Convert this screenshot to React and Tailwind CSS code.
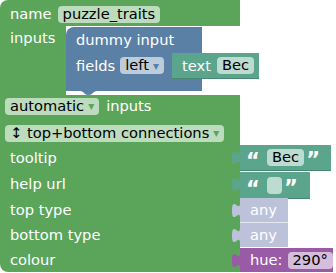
import React from "react";

const FONT = { fontFamily: '"DejaVu Sans", "Noto Sans", sans-serif' };

function Tab({ fillClass }) {
  return (
    <svg
      className="absolute left-[-8px] top-[5px] overflow-visible"
      width="9"
      height="15"
      viewBox="0 0 9 15"
    >
      <path className={fillClass} d="M8,0 C8,10 0,-8 0,7.5 S8,5 8,15 L9,15 L9,0 Z" />
    </svg>
  );
}

function Field({ children, className = "" }) {
  return (
    <span
      className={
        "h-[17px] px-[5px] rounded-[4px] bg-white/60 text-black flex items-center leading-none " +
        className
      }
    >
      {children}
    </span>
  );
}

function Quote({ ch }) {
  return (
    <span className="w-[18px] text-center text-white font-bold text-[21px] leading-none relative top-[4px]">
      {ch}
    </span>
  );
}

export default function App() {
  return (
    <div
      className="relative w-[336px] h-[273px] overflow-hidden bg-white text-[11pt] text-white"
      style={FONT}
    >
      <div className="flex flex-col">
        {/* top arm */}
        <div className="h-[26px] w-[240px] bg-[#5ba55b] rounded-tl-[8px] flex items-center pl-[10px] pt-[2px] gap-[6px]">
          <span>name</span>
          <Field>puzzle_traits</Field>
        </div>

        {/* statement area */}
        <div className="flex h-[69px]">
          <div className="w-[66px] bg-[#5ba55b] pl-[10px] pt-[3px] leading-[18px]">inputs</div>
          <div className="relative mt-[1px] flex flex-col self-start">
            <div className="h-[26px] w-[136px] bg-[#5b80a5] rounded-tl-[8px] flex items-center pl-[10px]">
              dummy input
            </div>
            <div className="flex h-[25px]">
              <div className="w-[106px] bg-[#5b80a5] flex items-center pl-[10px] gap-[5px]">
                <span>fields</span>
                <Field className="gap-[4px]">
                  left<span className="text-[#5b80a5] text-[12px]">▾</span>
                </Field>
              </div>
              <div className="relative w-[87px] bg-[#5ba58c] flex items-center pl-[10px] gap-[6px] shadow-[0_1px_0_#4a8772]">
                <span>text</span>
                <Field>Bec</Field>
              </div>
            </div>
            <div className="h-[13px] w-[136px] bg-[#5b80a5]" />
            <svg
              className="absolute left-[14px] top-full"
              width="17"
              height="4"
              viewBox="0 0 17 4"
            >
              <path className="fill-[#5b80a5]" d="M0,0 C4,0 4,4 8.5,4 C13,4 13,0 17,0 Z" />
            </svg>
          </div>
        </div>

        {/* lower section */}
        <div className="flex">
          <div className="w-[240px] bg-[#5ba55b] rounded-bl-[8px] flex flex-col pt-[2px]">
            <div className="h-[18px] flex items-center pl-[5px]">
              <Field className="gap-[4px]">
                automatic<span className="text-[#5ba55b] text-[12px]">▾</span>
              </Field>
              <span className="ml-[7px]">inputs</span>
            </div>
            <div className="h-[18px] mt-[9px] flex items-center pl-[5px]">
              <Field className="gap-[4px]">
                ↕ top+bottom connections<span className="text-[#5ba55b] text-[12px]">▾</span>
              </Field>
            </div>
            <div className="mt-[3px] h-[26px] flex items-center pl-[10px]">tooltip</div>
            <div className="h-[26px] flex items-center pl-[10px]">help url</div>
            <div className="h-[25px] flex items-center pl-[10px]">top type</div>
            <div className="h-[25px] flex items-center pl-[10px]">bottom type</div>
            <div className="h-[25px] flex items-center pl-[10px]">colour</div>
          </div>

          <div className="flex flex-col pt-[50px]">
            <div className="relative h-[25px] w-[91px] bg-[#5ba58c] flex items-center pl-[4px] shadow-[0_1px_0_#4a8772]">
              <Tab fillClass="fill-[#5ba58c]" />
              <Quote ch="“" />
              <Field className="ml-[5px]">Bec</Field>
              <span className="ml-[2px]"><Quote ch="”" /></span>
            </div>
            <div className="relative mt-[2px] h-[26px] w-[70px] bg-[#5ba58c] flex items-center pl-[4px] shadow-[0_1px_0_#4a8772]">
              <Tab fillClass="fill-[#5ba58c]" />
              <Quote ch="“" />
              <Field className="ml-[5px] w-[15px]" />
              <span className="ml-[2px]"><Quote ch="”" /></span>
            </div>
            <div className="relative h-[24px] w-[48px] bg-[#bdc2db] flex items-center pl-[10px]">
              <Tab fillClass="fill-[#bdc2db]" />
              any
            </div>
            <div className="relative h-[25px] w-[48px] bg-[#bdc2db] border-t border-white/60 flex items-center pl-[10px]">
              <Tab fillClass="fill-[#bdc2db]" />
              any
            </div>
            <div className="relative mt-[1px] h-[24px] w-[93px] bg-[#995ba5] flex items-center pl-[10px] gap-[5px]">
              <Tab fillClass="fill-[#995ba5]" />
              <span>hue:</span>
              <Field>290°</Field>
            </div>
          </div>
        </div>
      </div>
    </div>
  );
}
